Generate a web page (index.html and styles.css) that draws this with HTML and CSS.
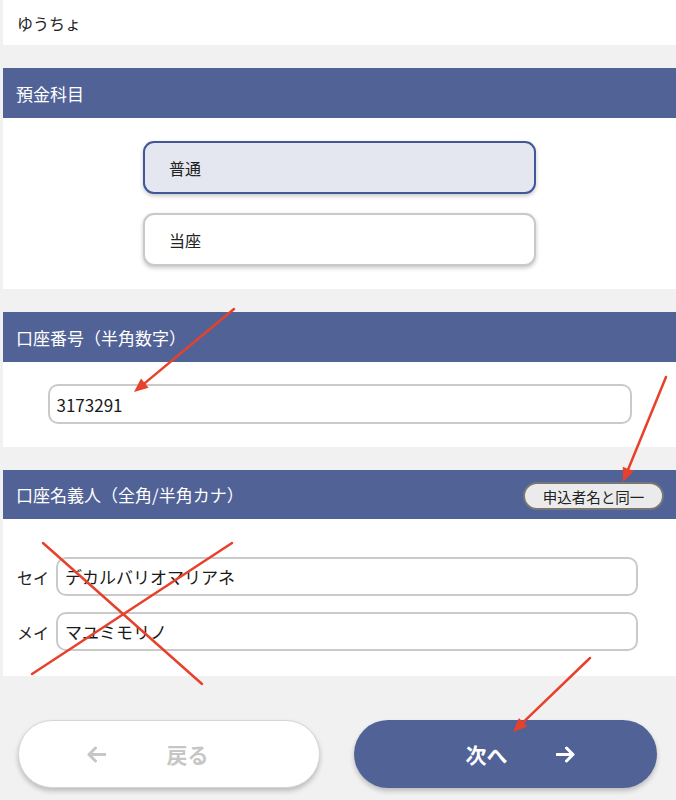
FILE: index.html
```html
<!DOCTYPE html>
<html lang="ja">
<head>
    <meta charset="UTF-8">
    <meta name="viewport" content="width=device-width, initial-scale=1.0">
    <title>口座情報入力</title>
    <link rel="stylesheet" href="styles.css">
</head>
<body>
    <div class="page">
        <div class="panel bank">ゆうちょ</div>

        <div class="section">
            <div class="sec-head">預金科目</div>
            <div class="sec-body options">
                <div class="option selected">普通</div>
                <div class="option">当座</div>
            </div>
        </div>

        <div class="section">
            <div class="sec-head">口座番号（半角数字）</div>
            <div class="sec-body number">
                <div class="field wide">3173291</div>
            </div>
        </div>

        <div class="section">
            <div class="sec-head short">
                <span>口座名義人（全角/半角カナ）</span>
                <button class="same-btn">申込者名と同一</button>
            </div>
            <div class="sec-body names">
                <div class="name-row">
                    <span class="name-label">セイ</span>
                    <div class="field">デカルバリオマリアネ</div>
                </div>
                <div class="name-row">
                    <span class="name-label">メイ</span>
                    <div class="field">マユミモリノ</div>
                </div>
            </div>
        </div>

        <div class="actions">
            <a href="#" class="btn back">
                <svg class="arr" width="20" height="17" viewBox="0 0 20 17"><path d="M19 8.5H3M9.5 2L3 8.5L9.5 15" fill="none" stroke="currentColor" stroke-width="3" stroke-linecap="round" stroke-linejoin="round"/></svg>
                <span>戻る</span>
            </a>
            <a href="#" class="btn next">
                <span>次へ</span>
                <svg class="arr" width="20" height="17" viewBox="0 0 20 17"><path d="M1 8.5H17M10.5 2L17 8.5L10.5 15" fill="none" stroke="currentColor" stroke-width="3" stroke-linecap="round" stroke-linejoin="round"/></svg>
            </a>
        </div>

        <!-- 赤い注釈 -->
        <svg class="marks" width="676" height="800" viewBox="0 0 676 800">
            <g stroke="#e8412b" stroke-width="2.5" stroke-linecap="round" fill="none">
                <path d="M234 309L144.8 383.1"/>
                <path d="M666 377L628.3 469"/>
                <path d="M590 658L523.1 722.3"/>
                <path d="M43 543L202 684"/>
                <path d="M232 543L32 674"/>
            </g>
            <g fill="#e8412b">
                <polygon points="134,392 148.6,387.7 141,378.5"/>
                <polygon points="623,482 633.9,471.3 622.8,466.8"/>
                <polygon points="513,732 527.3,726.6 518.9,718"/>
            </g>
        </svg>
    </div>
</body>
</html>
```

FILE: styles.css
```css
/* 基本 */
body {
    margin: 0;
    padding: 0;
    background-color: #f1f1f1;
    font-family: "Noto Sans CJK JP", "Noto Sans", sans-serif;
    color: #222;
    font-size: 16px;
}
.page {
    position: relative;
    width: 676px;
    height: 800px;
    padding-left: 3px;
    box-sizing: border-box;
    display: flex;
    flex-direction: column;
    gap: 23px;
}
.panel {
    background-color: #fff;
}
.bank {
    height: 45px;
    display: flex;
    align-items: center;
    padding-left: 14px;
    margin-top: -2px;
    padding-top: 2px;
}
.sec-head {
    height: 50px;
    background-color: #516297;
    color: #fff;
    font-size: 17px;
    display: flex;
    align-items: center;
    justify-content: space-between;
    padding: 0 12px 0 13px;
}
.sec-head.short {
    height: 49px;
}
.sec-body {
    background-color: #fff;
}
.options {
    display: flex;
    flex-direction: column;
    align-items: center;
    gap: 19px;
    padding: 23px 0 23px;
}
.option {
    width: 393px;
    height: 53px;
    box-sizing: border-box;
    border: 2px solid #c9c9c9;
    border-radius: 11px;
    background-color: #fff;
    display: flex;
    align-items: center;
    padding-left: 24px;
    box-shadow: 0 2px 4px rgba(0, 0, 0, 0.22);
}
.option.selected {
    background-color: #e5e7f0;
    border-color: #42569a;
}
.number {
    padding: 22px 0 23px;
    display: flex;
    justify-content: center;
}
.field {
    height: 40px;
    box-sizing: border-box;
    border: 2px solid #cacaca;
    border-radius: 10px;
    background-color: #fff;
    display: flex;
    align-items: center;
    padding-left: 7px;
    font-size: 17px;
    color: #1a1a1a;
}
.field.wide {
    width: 584px;
}
.same-btn {
    font-family: inherit;
    font-size: 14.5px;
    color: #222;
    background-color: #ebebeb;
    border: 2px solid #777;
    border-radius: 14px;
    height: 28px;
    width: 141px;
    padding: 0;
    margin-top: 3px;
}
.names {
    display: flex;
    flex-direction: column;
    gap: 16px;
    padding: 38px 38px 24px 14px;
    height: 157px;
    box-sizing: border-box;
}
.name-row {
    display: flex;
    align-items: center;
    gap: 7px;
}
.name-row .field {
    flex: 1;
    height: 39px;
}
.name-label {
    width: 32px;
    font-size: 16px;
}
.actions {
    display: flex;
    gap: 34px;
    padding: 21px 0 0 15px;
}
.btn {
    height: 68px;
    box-sizing: border-box;
    border-radius: 34px;
    display: flex;
    align-items: center;
    justify-content: center;
    font-size: 21px;
    font-weight: bold;
    text-decoration: none;
    box-shadow: 0 3px 5px rgba(0, 0, 0, 0.22);
}
.back {
    width: 302px;
    background-color: #fff;
    border: 1px solid #d6d6d6;
    color: #c6c6c6;
    gap: 61px;
    padding-right: 44px;
}
.next {
    width: 303px;
    background-color: #516297;
    color: #fff;
    gap: 48px;
    padding-left: 30px;
}
.marks {
    position: absolute;
    top: 0;
    left: 0;
    pointer-events: none;
}
```
